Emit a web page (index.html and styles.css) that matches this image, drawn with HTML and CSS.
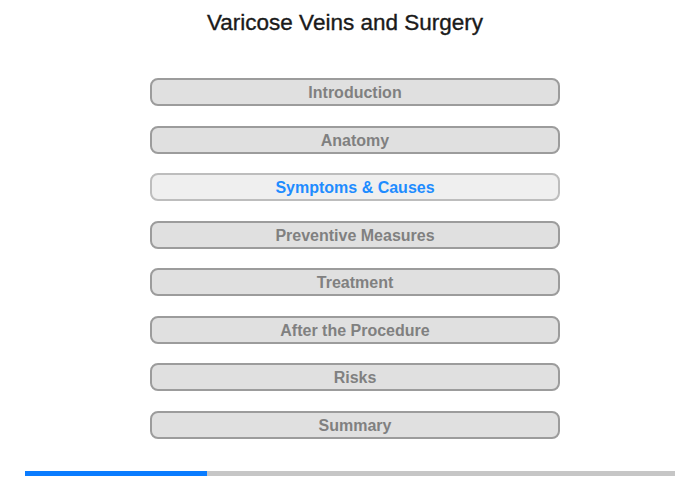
FILE: index.html
```html
<!DOCTYPE html>
<html>
<head>
<meta charset="utf-8">
<link rel="stylesheet" href="styles.css">
</head>
<body>
<div class="page">
  <h1 class="title">Varicose Veins and Surgery</h1>
  <nav class="menu">
    <div class="item">Introduction</div>
    <div class="item">Anatomy</div>
    <div class="item active">Symptoms &amp; Causes</div>
    <div class="item">Preventive Measures</div>
    <div class="item">Treatment</div>
    <div class="item">After the Procedure</div>
    <div class="item">Risks</div>
    <div class="item">Summary</div>
  </nav>
  <div class="progress"><div class="progress-fill" style="width:28%"></div></div>
</div>
</body>
</html>
```
FILE: styles.css
```css
html, body {
  margin: 0;
  padding: 0;
  background: #ffffff;
}
.page {
  width: 700px;
  height: 480px;
  display: flex;
  flex-direction: column;
  align-items: center;
  font-family: "Liberation Sans", Arial, sans-serif;
}
.title {
  margin: 10px 10px 0 0;
  font-size: 22.5px;
  line-height: 26px;
  font-weight: normal;
  color: #1a1a1a;
  -webkit-text-stroke: 0.35px #1a1a1a;
}
.menu {
  margin-top: 42px;
  margin-left: 10px;
  display: flex;
  flex-direction: column;
  gap: 19.5px;
}
.item {
  box-sizing: border-box;
  width: 410px;
  height: 28px;
  border: 2px solid #9c9c9c;
  border-radius: 8px;
  background: #e0e0e0;
  color: #808080;
  font-size: 16px;
  font-weight: bold;
  text-align: center;
  line-height: 26px;
}
.item.active {
  background: #efefef;
  border-color: #bdbdbd;
  color: #1e8cff;
}
.progress {
  margin-top: 32px;
  width: 650px;
  height: 5px;
  background: #c6c6c6;
}
.progress-fill {
  height: 100%;
  background: #0a7cff;
}
```
